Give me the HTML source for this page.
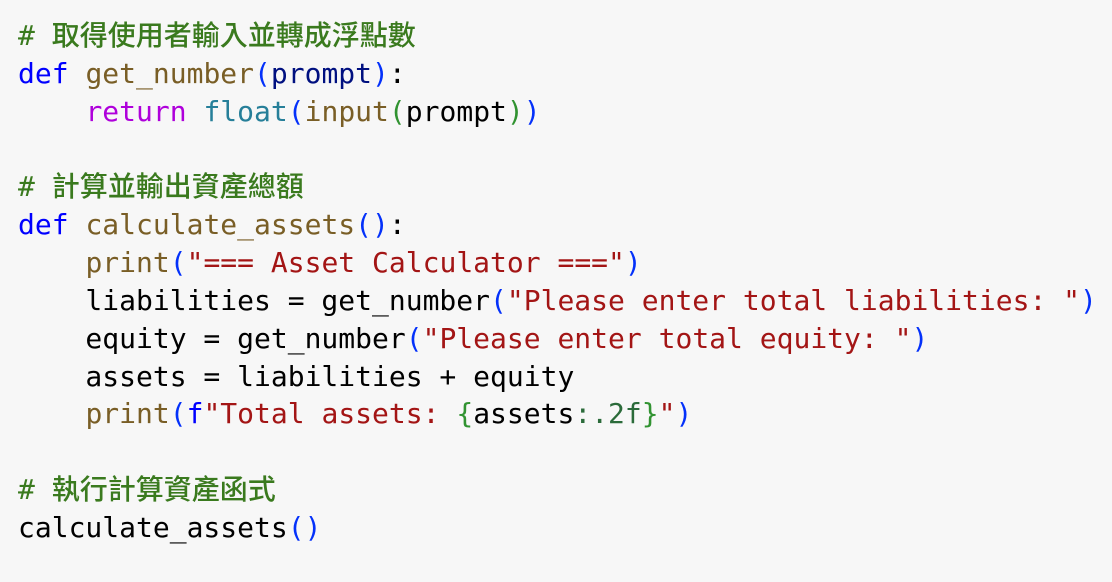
<!DOCTYPE html>
<html><head><meta charset="utf-8"><style>
html,body{margin:0;padding:0;width:1112px;height:582px;background:#f7f7f7;overflow:hidden}
pre{margin:0;position:absolute;left:18px;top:17px;font-family:"DejaVu Sans Mono","Liberation Mono","Noto Sans CJK TC",monospace;font-size:28px;line-height:37.85px;color:#000}
pre span{line-height:37.85px}
.c{color:#3a7a1e}.k{color:#0000ff}.f{color:#795e26}.p{color:#001080}.r{color:#af00db}.t{color:#267f99}.s{color:#a31515}.b{color:#0431fa}.g{color:#319331}.n{color:#2b6b3a}
.c .z{font-family:"Noto Sans CJK TC",sans-serif;font-size:28px;font-weight:500;line-height:20px}
</style></head><body>
<pre><span class="c"># <span class="z">取得使用者輸入並轉成浮點數</span></span>
<span class="k">def</span> <span class="f">get_number</span><span class="b">(</span><span class="p">prompt</span><span class="b">)</span>:
    <span class="r">return</span> <span class="t">float</span><span class="b">(</span><span class="f">input</span><span class="g">(</span>prompt<span class="g">)</span><span class="b">)</span>

<span class="c"># <span class="z">計算並輸出資產總額</span></span>
<span class="k">def</span> <span class="f">calculate_assets</span><span class="b">()</span>:
    <span class="f">print</span><span class="b">(</span><span class="s">"=== Asset Calculator ==="</span><span class="b">)</span>
    liabilities = get_number<span class="b">(</span><span class="s">"Please enter total liabilities: "</span><span class="b">)</span>
    equity = get_number<span class="b">(</span><span class="s">"Please enter total equity: "</span><span class="b">)</span>
    assets = liabilities + equity
    <span class="f">print</span><span class="b">(</span><span class="k">f</span><span class="s">"Total assets: </span><span class="g">{</span>assets<span class="n">:.2f</span><span class="g">}</span><span class="s">"</span><span class="b">)</span>

<span class="c"># <span class="z">執行計算資產函式</span></span>
calculate_assets<span class="b">()</span></pre>
</body></html>
